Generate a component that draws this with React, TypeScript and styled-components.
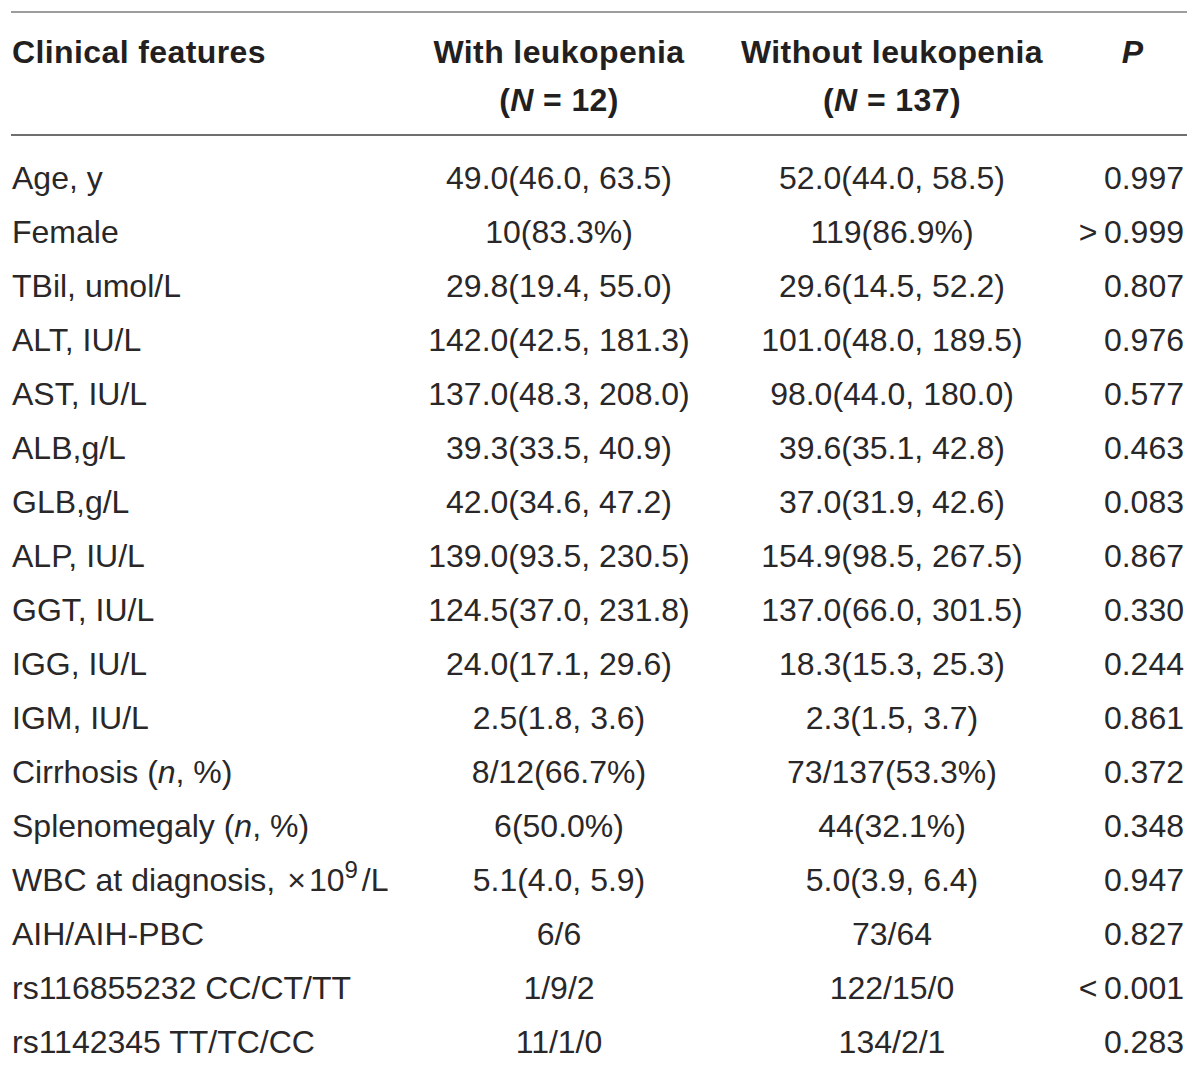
import React from 'react';
import styled, { createGlobalStyle } from 'styled-components';

interface Row {
    feature: React.ReactNode;
    withL: string;
    withoutL: string;
    p: string;
}

const GlobalStyle = createGlobalStyle`
    html, body {
        margin: 0;
        padding: 0;
        background: #ffffff;
    }
    body {
        font-family: "Liberation Sans", Arial, Helvetica, sans-serif;
        color: #231f20;
    }
`;

const Page = styled.div`
    width: 1200px;
    padding-top: 11px;
`;

const Table = styled.div`
    margin-left: 11px;
    width: 1176px;
`;

const Header = styled.div`
    display: grid;
    grid-template-columns: 389px 318px 348px 121px;
    border-top: 2px solid #9d9d9d;
    border-bottom: 2px solid #6f6f6f;
    padding: 15px 0 10px 0;
    font-size: 32px;
    font-weight: bold;
    letter-spacing: 0.4px;
    line-height: 48px;
`;

const HeadCell = styled.div<{ $align?: 'left' | 'center' }>`
    text-align: ${(p) => p.$align || 'center'};
    white-space: nowrap;
    padding-left: ${(p) => (p.$align === 'left' ? '1px' : '0')};
`;

const PHead = styled.div`
    text-align: center;
    padding-left: 12px;
    font-style: italic;
`;

const Body = styled.div`
    padding-top: 15px;
`;

const BodyRow = styled.div`
    display: grid;
    grid-template-columns: 389px 318px 348px 121px;
    height: 54px;
    align-items: center;
    font-size: 32px;
    line-height: 54px;
    color: #2a2728;
`;

const Cell = styled.div<{ $align: 'left' | 'center' | 'right' }>`
    text-align: ${(p) => p.$align};
    white-space: nowrap;
    padding-left: ${(p) => (p.$align === 'left' ? '1px' : '0')};
    padding-right: ${(p) => (p.$align === 'right' ? '3px' : '0')};
`;

const Times = styled.span`
    font-size: 32px;
    font-weight: 300;
    margin: 0 3px 0 12px;
`;

const Sup = styled.sup`
    font-size: 24px;
    line-height: 0;
    vertical-align: 13px;
    margin-right: 4px;
`;

const rows: Row[] = [
    { feature: 'Age, y', withL: '49.0(46.0, 63.5)', withoutL: '52.0(44.0, 58.5)', p: '0.997' },
    { feature: 'Female', withL: '10(83.3%)', withoutL: '119(86.9%)', p: '>\u20090.999' },
    { feature: 'TBil, umol/L', withL: '29.8(19.4, 55.0)', withoutL: '29.6(14.5, 52.2)', p: '0.807' },
    { feature: 'ALT, IU/L', withL: '142.0(42.5, 181.3)', withoutL: '101.0(48.0, 189.5)', p: '0.976' },
    { feature: 'AST, IU/L', withL: '137.0(48.3, 208.0)', withoutL: '98.0(44.0, 180.0)', p: '0.577' },
    { feature: 'ALB,g/L', withL: '39.3(33.5, 40.9)', withoutL: '39.6(35.1, 42.8)', p: '0.463' },
    { feature: 'GLB,g/L', withL: '42.0(34.6, 47.2)', withoutL: '37.0(31.9, 42.6)', p: '0.083' },
    { feature: 'ALP, IU/L', withL: '139.0(93.5, 230.5)', withoutL: '154.9(98.5, 267.5)', p: '0.867' },
    { feature: 'GGT, IU/L', withL: '124.5(37.0, 231.8)', withoutL: '137.0(66.0, 301.5)', p: '0.330' },
    { feature: 'IGG, IU/L', withL: '24.0(17.1, 29.6)', withoutL: '18.3(15.3, 25.3)', p: '0.244' },
    { feature: 'IGM, IU/L', withL: '2.5(1.8, 3.6)', withoutL: '2.3(1.5, 3.7)', p: '0.861' },
    { feature: <>Cirrhosis (<i>n</i>, %)</>, withL: '8/12(66.7%)', withoutL: '73/137(53.3%)', p: '0.372' },
    { feature: <>Splenomegaly (<i>n</i>, %)</>, withL: '6(50.0%)', withoutL: '44(32.1%)', p: '0.348' },
    { feature: <>WBC at diagnosis,<Times>×</Times>10<Sup>9</Sup>/L</>, withL: '5.1(4.0, 5.9)', withoutL: '5.0(3.9, 6.4)', p: '0.947' },
    { feature: 'AIH/AIH-PBC', withL: '6/6', withoutL: '73/64', p: '0.827' },
    { feature: 'rs116855232 CC/CT/TT', withL: '1/9/2', withoutL: '122/15/0', p: '<\u20090.001' },
    { feature: 'rs1142345 TT/TC/CC', withL: '11/1/0', withoutL: '134/2/1', p: '0.283' },
];

const App: React.FC = () => {
    return (
        <>
            <GlobalStyle />
            <Page>
                <Table>
                    <Header>
                        <HeadCell $align="left">Clinical features</HeadCell>
                        <HeadCell>
                            With leukopenia
                            <br />
                            (<i>N</i> = 12)
                        </HeadCell>
                        <HeadCell>
                            Without leukopenia
                            <br />
                            (<i>N</i> = 137)
                        </HeadCell>
                        <PHead>P</PHead>
                    </Header>
                    <Body>
                        {rows.map((row, i) => (
                            <BodyRow key={i}>
                                <Cell $align="left">{row.feature}</Cell>
                                <Cell $align="center">{row.withL}</Cell>
                                <Cell $align="center">{row.withoutL}</Cell>
                                <Cell $align="right">{row.p}</Cell>
                            </BodyRow>
                        ))}
                    </Body>
                </Table>
            </Page>
        </>
    );
};

export default App;
